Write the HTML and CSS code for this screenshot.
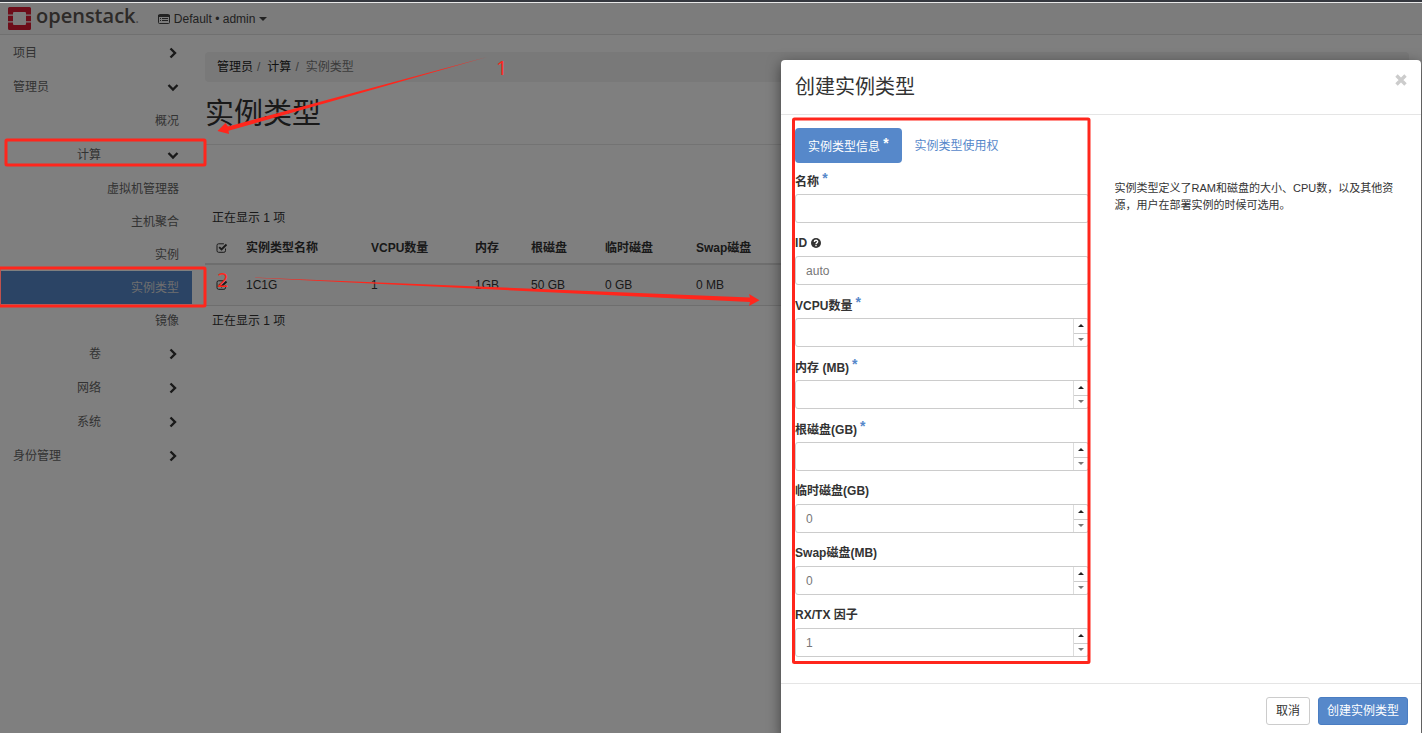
FILE: index.html
```html
<!DOCTYPE html>
<html lang="zh-CN">
<head>
<meta charset="utf-8">
<title>实例类型 - OpenStack</title>
<link rel="stylesheet" href="styles.css">
</head>
<body>
<svg class="sprite" aria-hidden="true">
  <symbol id="right" viewBox="0 0 12 12"><path d="M3.5 1.5 8 6l-4.500 4.500" fill="none" stroke="currentColor" stroke-width="2.400"/></symbol>
  <symbol id="down" viewBox="0 0 12 12"><path d="M1.500 4 6 8.500 10.500 4" fill="none" stroke="currentColor" stroke-width="2.400"/></symbol>
  <symbol id="check" viewBox="0 0 12 12"><path d="M9.500 6.500v2.200a1.600 1.600 0 0 1-1.600 1.600H2.600A1.600 1.600 0 0 1 1 8.700V3.400a1.600 1.600 0 0 1 1.600-1.600h5.300" fill="none" stroke="currentColor"/><path d="m3.200 5.200 2.300 2.300 5-5" fill="none" stroke="currentColor" stroke-width="1.900"/></symbol>
</svg>
<div class="window">
  <div class="chrome-edge"></div>
  <header class="topbar">
    <a class="brand" href="#">
      <svg class="mark" viewBox="0 0 23 23" aria-hidden="true"><path fill="#da1a32" d="M1.500 0h20A1.500 1.500 0 0 1 23 1.500V7.500h-5V6a1 1 0 0 0-1-1H6a1 1 0 0 0-1 1v1.500H0v-6A1.500 1.500 0 0 1 1.500 0zM0 8.700h5v5.600H0zM18 8.700h5v5.600h-5zM0 15.500h5V17a1 1 0 0 0 1 1h11a1 1 0 0 0 1-1v-1.500h5v6a1.500 1.500 0 0 1-1.500 1.500h-20A1.500 1.500 0 0 1 0 21.500z"/></svg>
      <span class="wordmark">openstack<span class="reg">.</span></span>
    </a>
    <button class="project" type="button">
      <svg class="list-icon" viewBox="0 0 12 10" aria-hidden="true"><rect x=".5" y=".5" width="11" height="9" rx="1" fill="none" stroke="currentColor"/><path d="M0 1h12v2H0zM2 4h1v1H2zM4 4h6v1H4zM2 6h1v1H2zM4 6h6v1H4z" fill="currentColor"/></svg>
      <span>Default • admin</span><span class="caret"></span>
    </button>
  </header>
  <div class="page">
    <nav class="sidebar">
      <a class="item top" href="#">项目<svg class="chev"><use href="#right"/></svg></a>
      <a class="item top" href="#">管理员<svg class="chev"><use href="#down"/></svg></a>
      <a class="item panel" href="#">概况</a>
      <a class="item group" href="#">计算<svg class="chev"><use href="#down"/></svg></a>
      <a class="item leaf" href="#">虚拟机管理器</a>
      <a class="item leaf" href="#">主机聚合</a>
      <a class="item leaf" href="#">实例</a>
      <a class="item leaf active" href="#">实例类型</a>
      <a class="item leaf" href="#">镜像</a>
      <a class="item group" href="#">卷<svg class="chev"><use href="#right"/></svg></a>
      <a class="item group" href="#">网络<svg class="chev"><use href="#right"/></svg></a>
      <a class="item group" href="#">系统<svg class="chev"><use href="#right"/></svg></a>
      <a class="item top" href="#">身份管理<svg class="chev"><use href="#right"/></svg></a>
    </nav>
    <main class="content">
      <div class="crumbs"><a href="#">管理员</a><span class="sep">/</span><a href="#">计算</a><span class="sep">/</span><span class="here">实例类型</span></div>
      <h1>实例类型</h1>
      <p class="count">正在显示 1 项</p>
      <table>
        <colgroup><col class="c-check"><col class="c-name"><col class="c-cpu"><col class="c-ram"><col class="c-root"><col class="c-temp"><col></colgroup>
        <thead><tr><th><svg class="tick"><use href="#check"/></svg></th><th>实例类型名称</th><th>VCPU数量</th><th>内存</th><th>根磁盘</th><th>临时磁盘</th><th>Swap磁盘</th></tr></thead>
        <tbody><tr><td><svg class="tick"><use href="#check"/></svg></td><td>1C1G</td><td>1</td><td>1GB</td><td>50 GB</td><td>0 GB</td><td>0 MB</td></tr></tbody>
      </table>
      <p class="count foot">正在显示 1 项</p>
    </main>
  </div>
  <div class="backdrop"></div>

  <section class="modal" role="dialog" aria-labelledby="modal-title">
    <div class="modal-head">
      <h2 id="modal-title">创建实例类型</h2>
      <button class="close" type="button" aria-label="关闭"><svg viewBox="0 0 12 12"><path d="m1.500 1.500 9 9m0-9-9 9" stroke="currentColor" stroke-width="3.400"/></svg></button>
    </div>
    <form class="modal-body">
      <div class="fields">
        <div class="tabs"><button class="tab on" type="button">实例类型信息<span class="star">*</span></button><button class="tab" type="button">实例类型使用权</button></div>
        <div class="field"><label for="name">名称<span class="star">*</span></label><div class="box"><input id="name" type="text"></div></div>
        <div class="field"><label for="fid">ID<svg class="help" viewBox="0 0 10 10" aria-hidden="true"><circle cx="5" cy="5" r="5" fill="currentColor"/><path d="M3.300 3.900C3.400 1.700 6.800 1.800 6.700 3.800 6.600 4.900 5 4.900 5 6.300" fill="none" stroke="#fff" stroke-width="1.400"/><path d="M4.300 7h1.400v1.300H4.300z" fill="#fff"/></svg></label><div class="box"><input id="fid" type="text" value="auto"></div></div>
        <div class="field"><label for="cpu">VCPU数量<span class="star">*</span></label><div class="box"><input id="cpu" type="number"><span class="spin"><button type="button" aria-label="增加"><i class="up"></i></button><button type="button" aria-label="减少"><i class="dn"></i></button></span></div></div>
        <div class="field"><label for="ram">内存 (MB)<span class="star">*</span></label><div class="box"><input id="ram" type="number"><span class="spin"><button type="button" aria-label="增加"><i class="up"></i></button><button type="button" aria-label="减少"><i class="dn"></i></button></span></div></div>
        <div class="field"><label for="root">根磁盘(GB)<span class="star">*</span></label><div class="box"><input id="root" type="number"><span class="spin"><button type="button" aria-label="增加"><i class="up"></i></button><button type="button" aria-label="减少"><i class="dn"></i></button></span></div></div>
        <div class="field"><label for="temp">临时磁盘(GB)</label><div class="box"><input id="temp" type="number" value="0"><span class="spin"><button type="button" aria-label="增加"><i class="up"></i></button><button type="button" aria-label="减少"><i class="dn"></i></button></span></div></div>
        <div class="field"><label for="swap">Swap磁盘(MB)</label><div class="box"><input id="swap" type="number" value="0"><span class="spin"><button type="button" aria-label="增加"><i class="up"></i></button><button type="button" aria-label="减少"><i class="dn"></i></button></span></div></div>
        <div class="field"><label for="rxtx">RX/TX 因子</label><div class="box"><input id="rxtx" type="number" value="1"><span class="spin"><button type="button" aria-label="增加"><i class="up"></i></button><button type="button" aria-label="减少"><i class="dn"></i></button></span></div></div>
      </div>
      <p class="desc">实例类型定义了RAM和磁盘的大小、CPU数，以及其他资源，用户在部署实例的时候可选用。</p>
    </form>
    <div class="modal-foot"><button class="btn" type="button">取消</button><button class="btn primary" type="button">创建实例类型</button></div>
  </section>

  <svg class="marks" aria-hidden="true">
    <g fill="none" stroke="#ff261c" stroke-width="3">
      <rect x="6" y="140" width="199" height="25" rx="1"/>
      <rect x="-1" y="268" width="206" height="38" rx="1"/>
      <rect x="793.500" y="119" width="295.500" height="543.500" rx="1"/>
    </g>
    <g fill="#ff261c">
      <path d="M487 57 228 126.500 225.500 123 217.500 131 229 134 228.500 130.800z"/>
      <path d="M240 277 750 297.500 749 294 759.500 300.200 749 306 750 302z"/>
      <text x="496" y="75">1</text>
      <text x="217" y="287">2</text>
    </g>
  </svg>
</div>
</body>
</html>
```
FILE: styles.css
```css
* { box-sizing: border-box; }
body {
  margin: 0;
  font: 12px/16px "Liberation Sans", "Noto Sans CJK SC", sans-serif;
  color: #333;
  background: #fff;
}
button, input { font: inherit; color: inherit; }
button { background: none; border: 0; padding: 0; }
a { color: inherit; text-decoration: none; }
h1, h2, p { margin: 0; font-weight: 400; }
.sprite { display: none; }
.window { position: relative; height: 100vh; overflow: hidden; }
.chrome-edge { height: 3px; background: #35383f; border-bottom: 1px solid #e8e8e8; }

.topbar {
  display: flex;
  align-items: center;
  gap: 19px;
  height: 32px;
  padding-left: 8px;
  background: #f8f8f8;
  border-bottom: 1px solid #e0e0e0;
}
.brand { display: flex; align-items: center; gap: 5px; }
.mark { width: 23px; height: 23px; }
.wordmark { font: 600 20px/28px "Open Sans", sans-serif; color: #5a5450; padding-bottom: 2px; }
.reg { font-size: 12px; color: #999; }
.project { display: flex; align-items: center; gap: 4px; color: #444; }
.list-icon { width: 12px; height: 10px; }
.caret { border: 4px solid transparent; border-top-color: currentColor; border-bottom: 0; }

.page { display: flex; }
.sidebar { flex: none; width: 192px; padding: 1px 0 0 1px; }
.item { display: flex; align-items: center; justify-content: flex-end; height: 34px; padding-right: 13px; color: #666; }
.top { justify-content: space-between; padding-left: 12px; }
.group .chev { margin-left: 66px; }
.leaf { height: 33px; }
.active { background: #5688ca; color: #ddd; }
.chev { width: 12px; height: 12px; color: #333; }

.content { flex: 1; padding: 17px 13px 0; }
.crumbs { display: flex; height: 30px; align-items: center; padding: 0 12px; background: #f3f3f3; border-radius: 4px; color: #222; }
.sep { padding: 0 7px 0 4px; color: #777; }
.here { color: #777; }
h1 { font-size: 29px; line-height: 40px; padding: 12px 0 10px; border-bottom: 1px solid #e6e6e6; }
.count { padding: 65px 7px 7px; }
.foot { padding-top: 7px; }
table { width: 100%; table-layout: fixed; border-collapse: collapse; text-align: left; }
th, td { padding: 0 8px; height: 41px; border-bottom: 1px solid #ddd; white-space: nowrap; }
th { height: 31px; border-bottom: 2px solid #ddd; }
td { background: #f9f9f9; }
th:first-child, td:first-child { padding: 0 0 0 11px; }
.tick { display: block; width: 12px; height: 12px; }
.c-check { width: 33px; }
.c-name { width: 125px; }
.c-cpu { width: 104px; }
.c-ram { width: 56px; }
.c-root { width: 74px; }
.c-temp { width: 91px; }
.backdrop { position: absolute; inset: 3px 0 0; background: rgba(0, 0, 0, .5); }

.modal {
  position: absolute;
  top: 60px;
  right: 1px;
  width: 45%;
  background: #fff;
  border-radius: 4px;
  box-shadow: 0 4px 14px rgba(0, 0, 0, .5);
}
.modal-head { display: flex; justify-content: space-between; align-items: flex-start; padding: 14px; border-bottom: 1px solid #e5e5e5; }
h2 { font-size: 20px; line-height: 26px; }
.close { color: #ccc; height: 12px; }
.close svg { display: block; width: 12px; height: 12px; }
.modal-body { display: grid; grid-template-columns: 1fr 1fr; gap: 26px; padding: 13px 13px 15px 14px; }
.tabs { display: flex; margin-bottom: 9px; }
.tab { height: 35px; padding: 0 13px; border-radius: 4px; color: #5688ca; white-space: nowrap; }
.on { background: #5688ca; color: #fff; }
.star { padding-left: 3px; color: #5688ca; font-weight: 700; font-size: 14px; line-height: 12px; vertical-align: 3px; }
.on .star { color: #fff; }
.field { display: grid; gap: 4px; margin-bottom: 11px; }
.field label { height: 18px; line-height: 18px; font-weight: 700; white-space: nowrap; }
.help { width: 10px; height: 10px; margin-left: 4px; vertical-align: -1px; }
.box { display: flex; height: 29px; border: 1px solid #ccc; border-radius: 3px; overflow: hidden; }
.box input { flex: 1; min-width: 0; border: 0; outline: 0; padding: 0 10px; background: none; color: #777; appearance: textfield; }
.box input::-webkit-inner-spin-button { appearance: none; }
.spin { display: grid; grid-template-rows: 1fr 1fr; width: 15px; border-left: 1px solid #ddd; }
.spin button { display: grid; place-items: center; }
.spin button + button { border-top: 1px solid #ccc; }
.up, .dn { border: 3px solid transparent; }
.up { border-top: 0; border-bottom-color: #222; }
.dn { border-bottom: 0; border-top-color: #777; }
.desc { padding: 52px 4px 0 0; font-size: 11px; line-height: 17px; }
.modal-foot { display: flex; justify-content: flex-end; gap: 8px; padding: 13px; border-top: 1px solid #e5e5e5; }
.btn { height: 28px; padding: 0 9px; border: 1px solid #ccc; border-radius: 3px; }
.primary { background: #5688ca; border-color: #4a7dc2; color: #fff; padding: 0 8px; }

.marks { position: absolute; inset: 0; width: 100%; height: 100%; pointer-events: none; }
.marks text { font: 20px "Open Sans", sans-serif; }
```
